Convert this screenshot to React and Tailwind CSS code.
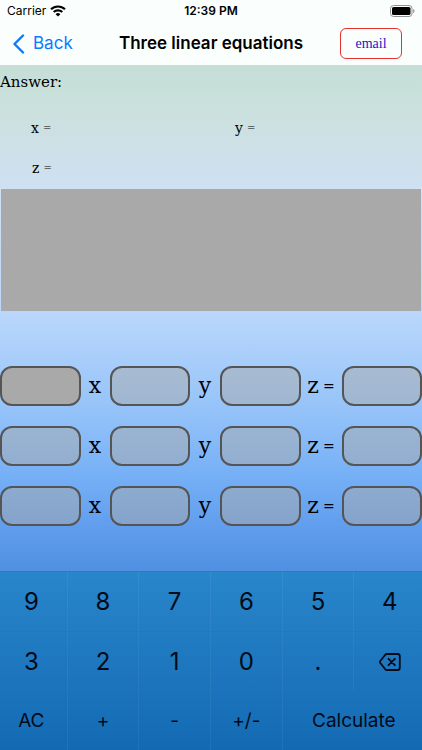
import React, { useState } from 'react';

const rows = [0, 1, 2];

const keys = [
  { label: '9' },
  { label: '8' },
  { label: '7' },
  { label: '6' },
  { label: '5' },
  { label: '4' },
  { label: '3' },
  { label: '2' },
  { label: '1' },
  { label: '0' },
  { label: '.' },
  { label: 'Delete', icon: true },
  { label: 'AC', small: true },
  { label: '+', small: true },
  { label: '-', small: true },
  { label: '+/-', small: true },
  { label: 'Calculate', small: true, wide: true },
];

const WifiIcon = () => (
  <svg width="16" height="12" viewBox="0 0 16 12" fill="none" stroke="#000" strokeWidth="2.1" aria-hidden="true">
    <path d="M1 4.3a10 10 0 0 1 14 0" />
    <path d="M3.7 7.1a6.1 6.1 0 0 1 8.6 0" />
    <path d="M8 11.6 5.6 9.2a3.4 3.4 0 0 1 4.8 0z" fill="#000" stroke="none" />
  </svg>
);

const BatteryIcon = () => (
  <svg width="25" height="12" viewBox="0 0 25 12" aria-hidden="true">
    <rect x="0.5" y="0.5" width="21.5" height="11" rx="3" fill="none" stroke="#8f9292" />
    <rect x="2" y="2" width="18.5" height="8" rx="1.6" fill="#000" />
    <path d="M23.2 4v4c.8-.3 1.3-1.1 1.3-2s-.5-1.7-1.3-2z" fill="#8f9292" />
  </svg>
);

const DeleteIcon = () => (
  <svg
    width="22"
    height="18"
    viewBox="0 0 22 18"
    fill="none"
    stroke="currentColor"
    strokeWidth="1.8"
    strokeLinecap="round"
    strokeLinejoin="round"
    aria-hidden="true"
  >
    <path d="M8 1h10.500a2.300 2.300 0 0 1 2.300 2.300v11.400a2.300 2.300 0 0 1-2.300 2.300H8a2.300 2.300 0 0 1-1.700-.7L1.500 10.300a1.800 1.800 0 0 1 0-2.600L6.300 1.700A2.300 2.300 0 0 1 8 1z" />
    <path d="m9.500 5.800 6.400 6.400m0-6.400-6.400 6.400" />
  </svg>
);

const Field = ({ label, value, active, onFocus, onChange }) => (
  <input
    aria-label={label}
    value={value}
    onFocus={onFocus}
    onChange={(e) => onChange(e.target.value)}
    className={`h-10 min-w-0 flex-1 rounded-xl border-2 border-[#555555] px-2 text-center outline-none ${
      active ? 'bg-[#a9a9a9]' : 'bg-[#a9a9a9]/50'
    }`}
  />
);

const App = () => {
  const [values, setValues] = useState(Array(12).fill(''));
  const [active, setActive] = useState(0);

  const setValue = (index, value) => {
    setValues(values.map((v, i) => (i === index ? value : v)));
  };

  const pressKey = (key) => {
    const current = values[active];
    if (key === 'Calculate') return;
    if (key === 'AC') setValues(Array(12).fill(''));
    else if (key === 'Delete') setValue(active, current.slice(0, -1));
    else if (key === '+/-') setValue(active, current.startsWith('-') ? current.slice(1) : '-' + current);
    else setValue(active, current + key);
  };

  const field = (row, col, name) => {
    const index = row * 4 + col;
    return (
      <Field
        label={`Equation ${row + 1} ${name}`}
        value={values[index]}
        active={active === index}
        onFocus={() => setActive(index)}
        onChange={(value) => setValue(index, value)}
      />
    );
  };

  return (
    <div className="flex min-h-screen flex-col overflow-hidden font-['Inter',sans-serif] text-black">
      <header className="bg-[#fafffe]">
        <div className="grid h-[22px] grid-cols-3 items-center px-[7px] text-xs">
          <div className="flex items-center gap-1">
            <span>Carrier</span>
            <WifiIcon />
          </div>
          <span className="text-center font-semibold">12:39 PM</span>
          <div className="flex justify-end">
            <BatteryIcon />
          </div>
        </div>
        <div className="grid h-[43px] grid-cols-[1fr_auto_1fr] items-center">
          <a href="#back" className="flex items-center gap-2 pl-3 text-[17px] text-[#0a7aff]">
            <svg width="13" height="20" viewBox="0 0 13 20" fill="none" stroke="currentColor" strokeWidth="2.4" strokeLinecap="round" strokeLinejoin="round" aria-hidden="true">
              <path d="M11 1.500 2.500 10l8.500 8.500" />
            </svg>
            Back
          </a>
          <h1 className="text-[17px] font-semibold">Three linear equations</h1>
          <button className="mr-5 h-[31px] w-[62px] justify-self-end rounded-md border border-[#e8302c] font-['Liberation_Serif',serif] text-sm text-[#1e14c8]">
            email
          </button>
        </div>
      </header>

      <main className="flex flex-1 flex-col bg-[linear-gradient(180deg,#c4ded6_0%,#cbe1dd_9%,#cee0ea_18%,#cfe0f3_26%,#bad7fb_49%,#93c2f9_69%,#76b0f6_81%,#619eed_91%,#5090e2_100%)] font-['DejaVu_Serif',serif]">
        <h2 className="pt-[7px] text-[15px] leading-5">Answer:</h2>
        <div className="mt-[26px] grid grid-cols-2 gap-y-5 text-sm leading-5">
          <p className="flex items-center gap-1 pl-[31px]">
            x <span className="text-[10px]">=</span>
          </p>
          <p className="flex items-center gap-1 pl-6">
            y <span className="text-[10px]">=</span>
          </p>
          <p className="flex items-center gap-1 pl-8">
            z <span className="text-[10px]">=</span>
          </p>
        </div>
        <div className="mx-px mt-[11px] h-[122px] bg-[#a9a9a9]"></div>

        <div className="mt-[55px] mb-[45px] flex flex-col gap-5 text-[22px]">
          {rows.map((row) => (
            <div key={row} className="flex items-center">
              {field(row, 0, 'x')}
              <span className="w-[29px] text-center leading-10">x</span>
              {field(row, 1, 'y')}
              <span className="w-[30px] text-center leading-10">y</span>
              {field(row, 2, 'z')}
              <span className="flex w-[41px] items-center justify-center gap-1 leading-10">
                z <span className="text-sm">=</span>
              </span>
              {field(row, 3, 'result')}
            </div>
          ))}
        </div>
      </main>

      <div className="bg-linear-to-b from-[#2986cb] to-[#136ab3]">
        <div className="-mr-[3px] -ml-[5px] grid grid-cols-6">
          {keys.map((key) => (
            <button
              key={key.label}
              aria-label={key.label}
              onClick={() => pressKey(key.label)}
              className={`flex h-[60px] items-center justify-center border-t border-l border-t-[#0d7dc8]/50 border-l-white/5 text-[#020a18] ${
                key.wide ? 'col-span-2' : ''
              } ${key.small ? 'text-[19px]' : 'text-2xl'}`}
            >
              {key.icon ? <DeleteIcon /> : key.label}
            </button>
          ))}
        </div>
      </div>
    </div>
  );
};

export default App;
